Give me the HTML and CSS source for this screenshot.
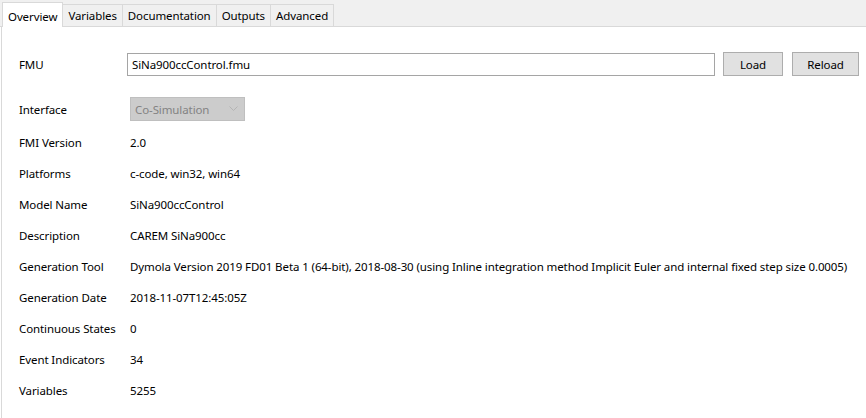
FILE: index.html
```html
<!DOCTYPE html>
<html lang="en">
<head>
    <meta charset="UTF-8">
    <title>FMU Overview</title>
    <link rel="stylesheet" href="styles.css">
</head>
<body>
    <div class="tabs">
        <span class="tab active">Overview</span>
        <span class="tab">Variables</span>
        <span class="tab">Documentation</span>
        <span class="tab">Outputs</span>
        <span class="tab">Advanced</span>
    </div>

    <div class="pane">
        <div class="fmu-row">
            <span class="label">FMU</span>
            <input class="path" type="text" value="SiNa900ccControl.fmu">
            <button class="btn load">Load</button>
            <button class="btn reload">Reload</button>
        </div>

        <div class="iface-row">
            <span class="label">Interface</span>
            <div class="combo">
                <span>Co-Simulation</span>
                <svg width="9" height="6" viewBox="0 0 9 6"><path d="M0.5 0.5 L4.5 4.5 L8.5 0.5" fill="none" stroke="#b4b4b4" stroke-width="1"/></svg>
            </div>
        </div>

        <div class="info">
            <span class="label">FMI Version</span><span>2.0</span>
            <span class="label">Platforms</span><span>c-code, win32, win64</span>
            <span class="label">Model Name</span><span>SiNa900ccControl</span>
            <span class="label">Description</span><span>CAREM SiNa900cc</span>
            <span class="label">Generation Tool</span><span>Dymola Version 2019 FD01 Beta 1 (64-bit), 2018-08-30 (using Inline integration method Implicit Euler and internal fixed step size 0.0005)</span>
            <span class="label">Generation Date</span><span>2018-11-07T12:45:05Z</span>
            <span class="label">Continuous States</span><span>0</span>
            <span class="label">Event Indicators</span><span>34</span>
            <span class="label">Variables</span><span>5255</span>
        </div>
    </div>
</body>
</html>
```

FILE: styles.css
```css
body { margin: 0; font-family: "Noto Sans", "Liberation Sans", sans-serif; font-size: 11.5px; letter-spacing: -0.1px; color: #000; background: #fff; height: 418px; overflow: hidden; }

.tabs { display: flex; align-items: flex-end; height: 26px; padding-left: 2px; background: #f0f0f0; border-bottom: 1px solid #d9d9d9; }
.tab { height: 22px; line-height: 22px; padding: 0 5px; border: 1px solid #d9d9d9; border-bottom: none; margin-left: -1px; background: #f0f0f0; box-sizing: border-box; }
.tab.active { height: 25px; line-height: 27px; margin-bottom: -1px; margin-left: 0; background: #fff; padding: 0 5px; position: relative; z-index: 1; }

.pane { height: 391px; margin-left: 1px; border-left: 1px solid #d9d9d9; padding: 25px 0 0 17px; box-sizing: border-box; }

.fmu-row { display: flex; align-items: center; height: 24px; }
.fmu-row .label { width: 108px; }
.path { width: 588px; height: 23px; margin: 0; padding: 0 4px; box-sizing: border-box; border: 1px solid #a5a5a5; font: inherit; letter-spacing: inherit; color: #000; }
.btn { height: 24px; margin: 0 0 0 8px; padding: 0; box-sizing: border-box; border: 1px solid #adadad; background: #e1e1e1; font: inherit; letter-spacing: inherit; color: #000; }
.load { width: 60px; }
.reload { width: 67px; margin-left: 9px; }

.iface-row { display: flex; align-items: center; height: 24px; margin-top: 21px; }
.iface-row .label { width: 111px; }
.combo { display: flex; align-items: center; justify-content: space-between; width: 115px; height: 24px; padding: 0 6px 0 4px; box-sizing: border-box; border: 1px solid #bfbfbf; background: #cccccc; color: #838383; }

.info { display: grid; grid-template-columns: 111px auto; grid-auto-rows: 31px; align-items: center; margin-top: 6px; }
.info span { white-space: nowrap; }
```
